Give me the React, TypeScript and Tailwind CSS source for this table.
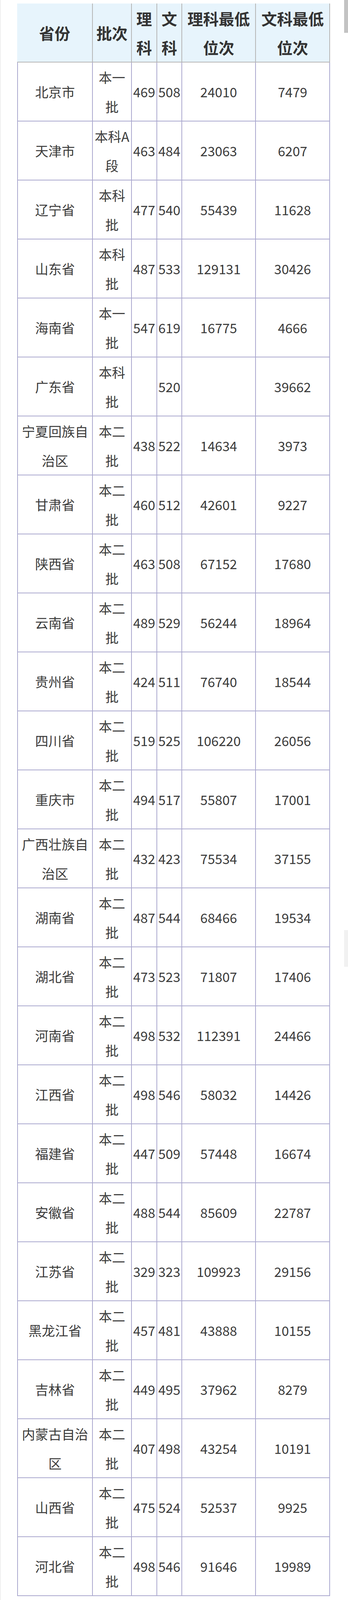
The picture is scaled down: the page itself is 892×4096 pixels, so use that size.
const headers = ["省份", "批次", "理科", "文科", "理科最低位次", "文科最低位次"];

const rows: string[][] = [
  ["北京市", "本一批", "469", "508", "24010", "7479"],
  ["天津市", "本科A段", "463", "484", "23063", "6207"],
  ["辽宁省", "本科批", "477", "540", "55439", "11628"],
  ["山东省", "本科批", "487", "533", "129131", "30426"],
  ["海南省", "本一批", "547", "619", "16775", "4666"],
  ["广东省", "本科批", "", "520", "", "39662"],
  ["宁夏回族自治区", "本二批", "438", "522", "14634", "3973"],
  ["甘肃省", "本二批", "460", "512", "42601", "9227"],
  ["陕西省", "本二批", "463", "508", "67152", "17680"],
  ["云南省", "本二批", "489", "529", "56244", "18964"],
  ["贵州省", "本二批", "424", "511", "76740", "18544"],
  ["四川省", "本二批", "519", "525", "106220", "26056"],
  ["重庆市", "本二批", "494", "517", "55807", "17001"],
  ["广西壮族自治区", "本二批", "432", "423", "75534", "37155"],
  ["湖南省", "本二批", "487", "544", "68466", "19534"],
  ["湖北省", "本二批", "473", "523", "71807", "17406"],
  ["河南省", "本二批", "498", "532", "112391", "24466"],
  ["江西省", "本二批", "498", "546", "58032", "14426"],
  ["福建省", "本二批", "447", "509", "57448", "16674"],
  ["安徽省", "本二批", "488", "544", "85609", "22787"],
  ["江苏省", "本二批", "329", "323", "109923", "29156"],
  ["黑龙江省", "本二批", "457", "481", "43888", "10155"],
  ["吉林省", "本二批", "449", "495", "37962", "8279"],
  ["内蒙古自治区", "本二批", "407", "498", "43254", "10191"],
  ["山西省", "本二批", "475", "524", "52537", "9925"],
  ["河北省", "本二批", "498", "546", "91646", "19989"],
];

// cell widths include each cell's 2px right border
const widths = ["w-[192px]", "w-[100px]", "w-[65px]", "w-[64px]", "w-[189px]", "w-[190px]"];

export default function App() {
  return (
    <div className="relative min-h-screen bg-white border-l border-[#dedede] font-['Noto_Sans_CJK_SC',sans-serif] text-[#3b3b3b]">
      <div className="ml-[43px] pt-[9px] w-[802px]">
        {/* header */}
        <div className="flex h-[151px] bg-[#e7f4fc] border-b-2 border-[#b6b6b6] text-[40px] leading-[74px] font-bold text-[#333]">
          {headers.map((h, i) => (
            <div
              key={h}
              className={`${i === 0 ? "w-[194px]" : widths[i]} flex items-center justify-center text-center border-r-2 border-[#b6b6b6] overflow-hidden`}
            >
              {h}
            </div>
          ))}
        </div>

        {/* body */}
        <div className="border-l-2 border-[#aba9cf] text-[34px] leading-[75px]">
          {rows.map((r) => (
            <div key={r[0]} className="flex h-[151px] border-b-2 border-[#aba9cf]">
              {r.map((c, i) => (
                <div
                  key={i}
                  className={`${widths[i]} flex items-center justify-center text-center border-r-2 border-[#aba9cf] overflow-hidden`}
                >
                  {c}
                </div>
              ))}
            </div>
          ))}
        </div>
      </div>

      {/* scroll indicators */}
      <div className="absolute right-0 top-0 h-[84px] w-[10px] bg-[#c3c3c3]" />
      <div className="absolute right-0 top-[2381px] h-[94px] w-[10px] bg-[#f1f1f1]" />
    </div>
  );
}
